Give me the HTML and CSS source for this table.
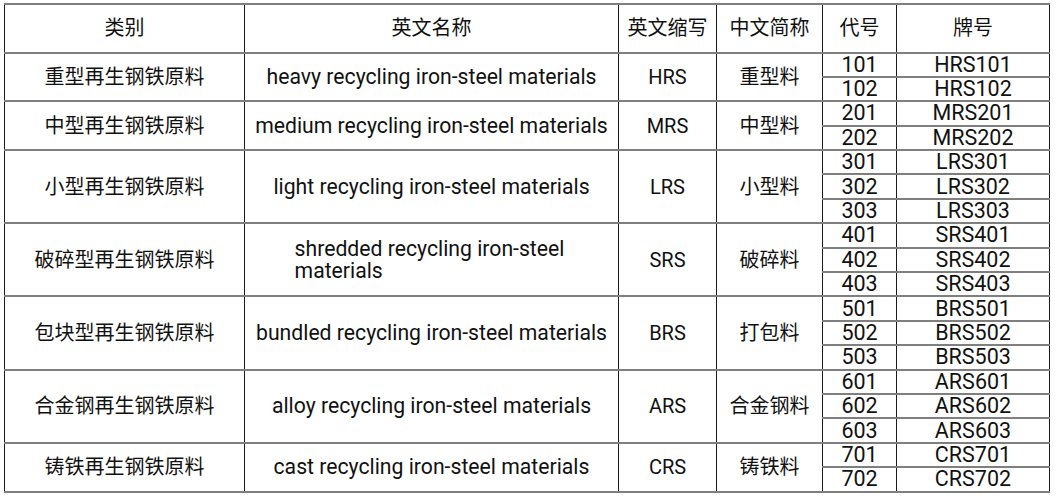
FILE: index.html
```html
<!DOCTYPE html>
<html lang="zh-CN">
<head>
<meta charset="utf-8">
<title>再生钢铁原料分类</title>
<link rel="stylesheet" href="styles.css">
</head>
<body>
<table class="grade-table">
  <colgroup>
    <col class="c-cat"><col class="c-en"><col class="c-abbr"><col class="c-cn"><col class="c-code"><col class="c-brand">
  </colgroup>
  <thead>
    <tr class="head-row">
      <th>类别</th><th>英文名称</th><th>英文缩写</th><th>中文简称</th><th>代号</th><th>牌号</th>
    </tr>
  </thead>
  <tbody>
    <tr><td rowspan="2">重型再生钢铁原料</td><td rowspan="2" class="en">heavy recycling iron-steel materials</td><td rowspan="2">HRS</td><td rowspan="2">重型料</td><td class="num">101</td><td class="num">HRS101</td></tr>
    <tr><td class="num">102</td><td class="num">HRS102</td></tr>

    <tr><td rowspan="2">中型再生钢铁原料</td><td rowspan="2" class="en">medium recycling iron-steel materials</td><td rowspan="2">MRS</td><td rowspan="2">中型料</td><td class="num">201</td><td class="num">MRS201</td></tr>
    <tr><td class="num">202</td><td class="num">MRS202</td></tr>

    <tr><td rowspan="3">小型再生钢铁原料</td><td rowspan="3" class="en">light recycling iron-steel materials</td><td rowspan="3">LRS</td><td rowspan="3">小型料</td><td class="num">301</td><td class="num">LRS301</td></tr>
    <tr><td class="num">302</td><td class="num">LRS302</td></tr>
    <tr><td class="num">303</td><td class="num">LRS303</td></tr>

    <tr><td rowspan="3">破碎型再生钢铁原料</td><td rowspan="3" class="en"><span class="wrap">shredded recycling iron-steel<br>materials</span></td><td rowspan="3">SRS</td><td rowspan="3">破碎料</td><td class="num">401</td><td class="num">SRS401</td></tr>
    <tr><td class="num">402</td><td class="num">SRS402</td></tr>
    <tr><td class="num">403</td><td class="num">SRS403</td></tr>

    <tr><td rowspan="3">包块型再生钢铁原料</td><td rowspan="3" class="en">bundled recycling iron-steel materials</td><td rowspan="3">BRS</td><td rowspan="3">打包料</td><td class="num">501</td><td class="num">BRS501</td></tr>
    <tr><td class="num">502</td><td class="num">BRS502</td></tr>
    <tr><td class="num">503</td><td class="num">BRS503</td></tr>

    <tr><td rowspan="3">合金钢再生钢铁原料</td><td rowspan="3" class="en">alloy recycling iron-steel materials</td><td rowspan="3">ARS</td><td rowspan="3">合金钢料</td><td class="num">601</td><td class="num">ARS601</td></tr>
    <tr><td class="num">602</td><td class="num">ARS602</td></tr>
    <tr><td class="num">603</td><td class="num">ARS603</td></tr>

    <tr><td rowspan="2">铸铁再生钢铁原料</td><td rowspan="2" class="en">cast recycling iron-steel materials</td><td rowspan="2">CRS</td><td rowspan="2">铸铁料</td><td class="num">701</td><td class="num">CRS701</td></tr>
    <tr><td class="num">702</td><td class="num">CRS702</td></tr>
  </tbody>
</table>
</body>
</html>
```
FILE: styles.css
```css
html, body {
  margin: 0;
  padding: 0;
  background: #ffffff;
}
body {
  padding: 3px 0 0 4px;
  font-family: Roboto, "Noto Sans CJK SC", sans-serif;
  font-size: 20px;
  color: #111111;
}
.grade-table {
  border-collapse: collapse;
  table-layout: fixed;
  width: 1046px;
}
.c-cat { width: 240px; }
.c-en { width: 374px; }
.c-abbr { width: 98px; }
.c-cn { width: 106px; }
.c-code { width: 74px; }
.c-brand { width: 153px; }

.grade-table th,
.grade-table td {
  border-top: 2px solid #7f7f7f;
  border-bottom: 2px solid #7f7f7f;
  border-left: 1px solid #1a1a1a;
  border-right: 1px solid #1a1a1a;
  padding: 0;
  text-align: center;
  vertical-align: middle;
  font-weight: normal;
  line-height: 22px;
  white-space: nowrap;
}
.grade-table tbody tr {
  height: 24.4px;
}
.head-row {
  height: 48.5px;
}
.grade-table td.en {
  font-size: 21.2px;
}
.grade-table td.num {
  font-size: 21.5px;
  line-height: 20px;
}
.wrap {
  display: inline-block;
  text-align: left;
  white-space: normal;
  transform: translateX(-2px);
}
```
